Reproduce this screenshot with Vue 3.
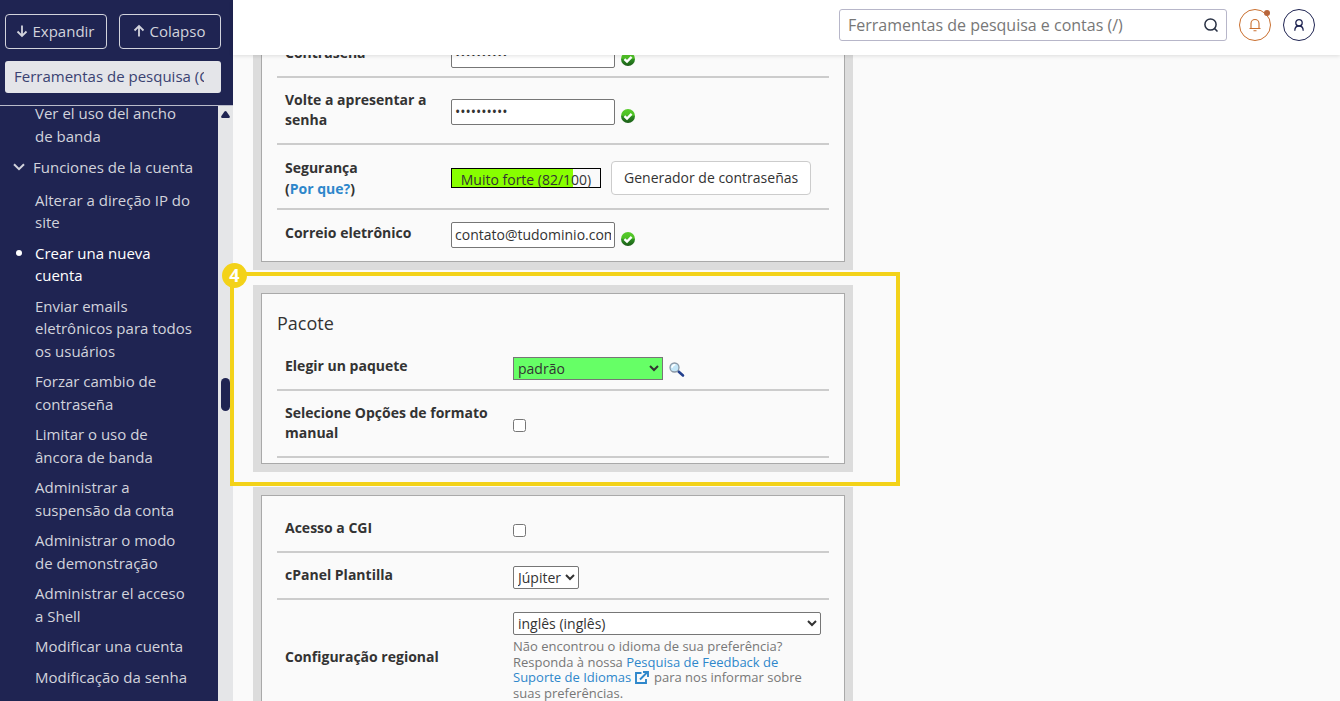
<script setup>
import { ref } from 'vue'

const menuBefore = ['Ver el uso del ancho de banda']
const menu = [
  { text: 'Alterar a direção IP do site' },
  { text: 'Crear una nueva cuenta', active: true },
  { text: 'Enviar emails eletrônicos para todos os usuários' },
  { text: 'Forzar cambio de contraseña' },
  { text: 'Limitar o uso de âncora de banda' },
  { text: 'Administrar a suspensão da conta' },
  { text: 'Administrar o modo de demonstração' },
  { text: 'Administrar el acceso a Shell' },
  { text: 'Modificar una cuenta' },
  { text: 'Modificação da senha' },
]

const password = ref('abcdefghij')
const confirmation = ref('abcdefghij')
const email = ref('contato@tudominio.com')
const strength = 82
const manual = ref(false)
const cgi = ref(false)
</script>

<template>
  <div class="page">
    <svg class="defs" width="0" height="0" aria-hidden="true">
      <defs>
        <linearGradient id="okFill" x1="0" y1="0" x2="0" y2="1">
          <stop offset="0" stop-color="#58cc2c" />
          <stop offset="0.45" stop-color="#4cc024" />
          <stop offset="0.55" stop-color="#2a8a20" />
          <stop offset="1" stop-color="#1c5c18" />
        </linearGradient>
        <symbol id="ok" viewBox="0 0 14 14">
          <circle cx="7" cy="7" r="7" fill="url(#okFill)" />
          <path d="M3.4 7.1 6 9.5l4.6-4.6" fill="none" stroke="#fff" stroke-width="2.4" />
        </symbol>
      </defs>
    </svg>

    <aside class="sidebar">
      <div class="side-head">
        <div class="side-buttons">
          <button type="button" class="side-btn">
            <svg width="12" height="14" viewBox="0 0 12 14" fill="none" stroke="currentColor" stroke-width="1.8">
              <path d="M6 1.5V12M1.500 7.500 6 12l4.500-4.500" />
            </svg>
            Expandir
          </button>
          <button type="button" class="side-btn">
            <svg width="12" height="14" viewBox="0 0 12 14" fill="none" stroke="currentColor" stroke-width="1.8">
              <path d="M6 12.500V2M1.500 6.500 6 2l4.500 4.500" />
            </svg>
            Colapso
          </button>
        </div>
        <input class="side-search" type="text" aria-label="Ferramentas de pesquisa" placeholder="Ferramentas de pesquisa (Ctrl + /)" />
      </div>
      <div class="side-body">
        <nav class="menu">
          <ul>
            <li v-for="m in menuBefore" :key="m"><a href="#">{{ m }}</a></li>
          </ul>
          <button type="button" class="group">
            <svg width="12" height="8" viewBox="0 0 12 8" fill="none" stroke="currentColor" stroke-width="2">
              <path d="M1 1.200 6 6.200l5-5" />
            </svg>
            Funciones de la cuenta
          </button>
          <ul>
            <li v-for="m in menu" :key="m.text" :class="{ active: m.active }">
              <a href="#">{{ m.text }}</a>
            </li>
          </ul>
        </nav>
        <div class="track" aria-hidden="true">
          <svg width="9" height="7" viewBox="0 0 9 7"><path d="M3.500.6q1-1 2 0L8.600 5q.8 2-1 2H1.400q-1.800 0-1-2z" fill="#1f2452" /></svg>
          <span class="thumb"></span>
        </div>
      </div>
    </aside>

    <div class="main">
      <header class="topbar">
        <div class="search">
          <input type="text" aria-label="Pesquisa" placeholder="Ferramentas de pesquisa e contas (/)" />
          <button type="button" aria-label="Buscar">
            <svg width="14" height="14" viewBox="0 0 14 14" fill="none" stroke="#293144" stroke-width="1.500">
              <circle cx="6.500" cy="6.500" r="5.600" /><path d="M10.400 10.400 13.500 13.500" />
            </svg>
          </button>
        </div>
        <button type="button" class="round bell" aria-label="Notificações">
          <svg width="14" height="14" viewBox="0 0 14 14" fill="none" stroke="currentColor" stroke-width="1.100">
            <path d="M1.500 10.500h11M3 10.500V5.500a4 4 0 0 1 8 0v5M5.500 12.800h3" />
          </svg>
          <span class="dot"></span>
        </button>
        <button type="button" class="round user" aria-label="Usuário">
          <svg width="12" height="14" viewBox="0 0 12 14" fill="none" stroke="currentColor" stroke-width="1.300">
            <circle cx="6" cy="4.800" r="3.200" /><path d="M1.800 12.800C1.800 10 3.500 8 6 8s4.200 2 4.200 4.800" />
          </svg>
        </button>
      </header>

      <form class="content" @submit.prevent>
        <section class="panel narrow">
          <div class="row">
            <label for="pw">Contraseña</label>
            <div class="field">
              <input id="pw" v-model="password" class="text" type="password" />
              <svg class="ok" width="14" height="14"><use href="#ok" /></svg>
            </div>
          </div>
          <div class="row">
            <label for="pw2">Volte a apresentar a senha</label>
            <div class="field">
              <input id="pw2" v-model="confirmation" class="text" type="password" />
              <svg class="ok" width="14" height="14"><use href="#ok" /></svg>
            </div>
          </div>
          <div class="row security">
            <div class="label">Segurança<br />(<a href="#">Por que?</a>)</div>
            <div class="field">
              <div class="meter" role="meter" aria-label="Segurança" :aria-valuenow="strength" aria-valuemin="0" aria-valuemax="100">
                <div class="fill" :style="{ width: strength + '%' }"></div>
                <span>Muito forte ({{ strength }}/100)</span>
              </div>
              <button type="button" class="generate">Generador de contraseñas</button>
            </div>
          </div>
          <div class="row last">
            <label for="mail">Correio eletrônico</label>
            <div class="field">
              <input id="mail" v-model="email" class="text" type="text" />
              <svg class="ok" width="14" height="14"><use href="#ok" /></svg>
            </div>
          </div>
        </section>

        <section class="panel">
          <h2>Pacote</h2>
          <div class="row">
            <label for="pkg">Elegir un paquete</label>
            <div class="field">
              <select id="pkg" class="pkg"><option>padrão</option></select>
              <svg width="16" height="18" viewBox="0 0 16 18">
                <path d="m9.500 9.500 4.500 4" stroke="#23408e" stroke-width="2.600" stroke-linecap="round" />
                <circle cx="5.500" cy="5.500" r="4.500" fill="#c4e6f8" stroke="#8b98a6" stroke-width="1.300" />
                <path d="M3 5.700a3 3 0 0 1 3.300-2.900" fill="none" stroke="#fff" stroke-width="1.600" />
              </svg>
            </div>
          </div>
          <div class="row">
            <label for="manual">Selecione Opções de formato manual</label>
            <div class="field"><input id="manual" v-model="manual" type="checkbox" /></div>
          </div>
          <div class="step" aria-hidden="true"><span>4</span></div>
        </section>

        <section class="panel">
          <div class="row">
            <label for="cgi">Acesso a CGI</label>
            <div class="field"><input id="cgi" v-model="cgi" type="checkbox" /></div>
          </div>
          <div class="row">
            <label for="theme">cPanel Plantilla</label>
            <div class="field"><select id="theme"><option>Júpiter</option></select></div>
          </div>
          <div class="row">
            <label for="locale">Configuração regional</label>
            <div>
              <select id="locale" class="wide"><option>inglês (inglês)</option></select>
              <p>
                Não encontrou o idioma de sua preferência? Responda à nossa
                <a href="#">Pesquisa de Feedback de Suporte de Idiomas
                  <svg width="14" height="13" viewBox="0 0 14 13" fill="none" stroke="currentColor" stroke-width="1.900">
                    <path d="M6.500 2H1v10h10V8M5 8.500 12 1.500M8 1h5v5" />
                  </svg></a>
                para nos informar sobre suas preferências.
              </p>
            </div>
          </div>
        </section>
      </form>
    </div>
  </div>
</template>

<style>
body {
  background: #fafafa;
}
</style>

<style scoped>
* {
  box-sizing: border-box;
}
.page {
  display: flex;
  height: 100vh;
  overflow: hidden;
  font-family: "Open Sans", "Noto Sans", sans-serif;
  font-size: 14px;
  line-height: 20px;
  color: #333;
}
button, input, select {
  font: inherit;
  color: inherit;
}
a {
  color: #2e87cb;
  text-decoration: none;
}
.defs {
  position: absolute;
}

/* sidebar */
.sidebar {
  display: flex;
  flex-direction: column;
  flex: 0 0 233px;
  background: #1f2452;
  color: #d2d3dc;
  font-size: 15px;
}
.side-head {
  padding: 14px 12px 12px 5px;
  border-bottom: 1px solid #b9bbca;
}
.side-buttons {
  display: flex;
  gap: 12px;
  margin-bottom: 12px;
}
.side-btn {
  display: flex;
  flex: 1;
  align-items: center;
  justify-content: center;
  gap: 5px;
  height: 35px;
  padding: 0 2px 2px 0;
  border: 1px solid #d2d3dc;
  border-radius: 4px;
  background: none;
}
.side-search {
  display: block;
  width: 100%;
  height: 32px;
  padding: 0 17px 2px 9px;
  border: 0;
  border-radius: 3px;
  background: #e4e5e9;
}
.side-search::placeholder {
  color: #3a4272;
}
.side-body {
  display: flex;
  flex: 1;
  min-height: 0;
  overflow: hidden;
}
.menu {
  flex: 1;
  min-width: 0;
  margin-top: -8px;
  line-height: 1.5;
}
.menu ul {
  margin: 0;
  padding: 0 24px 0 35px;
  list-style: none;
}
.menu li {
  position: relative;
  padding: 4px 0;
}
.menu a {
  color: inherit;
}
.menu .active {
  color: #fff;
}
.menu .active::before {
  content: "";
  position: absolute;
  left: -19px;
  top: 12px;
  width: 6px;
  height: 6px;
  border-radius: 50%;
  background: #fff;
}
.group {
  display: flex;
  align-items: center;
  gap: 8px;
  width: 100%;
  padding: 5px 0 6px 13px;
  border: 0;
  background: none;
  white-space: nowrap;
}
.track {
  position: relative;
  flex: 0 0 15px;
  background: #e5e6e8;
}
.track svg {
  display: block;
  margin: 5px 0 0 3px;
}
.thumb {
  position: absolute;
  left: 3px;
  top: 272px;
  width: 9px;
  height: 33px;
  border-radius: 5px;
  background: #1f2452;
}

/* top bar */
.main {
  position: relative;
  flex: 1;
  min-width: 0;
}
.topbar {
  position: absolute;
  z-index: 2;
  top: 0;
  left: 0;
  right: 0;
  display: flex;
  justify-content: flex-end;
  gap: 12px;
  height: 55px;
  padding: 9px 25px 0 12px;
  background: #fff;
  box-shadow: 0 1px 4px rgba(0, 0, 0, 0.12);
}
.search {
  display: flex;
  align-items: center;
  flex: 0 1 388px;
  height: 32px;
  border: 1px solid #b7b6c9;
  border-radius: 3px;
}
.search input {
  flex: 1;
  min-width: 0;
  padding: 0 8px;
  border: 0;
  background: none;
  font-size: 16px;
}
.search input::placeholder {
  color: #777;
}
.search button {
  display: flex;
  padding: 0 8px;
  border: 0;
  background: none;
}
.round {
  position: relative;
  display: flex;
  align-items: center;
  justify-content: center;
  flex: 0 0 32px;
  height: 32px;
  padding: 0;
  border: 1px solid currentColor;
  border-radius: 50%;
  background: #fff;
}
.bell {
  color: #c96f2f;
}
.user {
  color: #1f2452;
}
.dot {
  position: absolute;
  top: 0;
  right: 0;
  width: 6px;
  height: 6px;
  border-radius: 50%;
  background: #b8653a;
}

/* form panels */
.content {
  display: flex;
  flex-direction: column;
  gap: 15px;
  max-width: 620px;
  padding: 12px 0 0 20px;
}
.panel {
  position: relative;
  padding: 10px 15px 5px;
  margin: 8px;
  border: 1px solid #a9a9a9;
  background: #fafafa;
  box-shadow: 0 0 0 8px #dcdcdc;
}
h2 {
  margin: 0;
  padding: 7px 0 9px;
  font-size: 18px;
  font-weight: 400;
  line-height: 24px;
}
.row {
  display: grid;
  grid-template-columns: 228px 1fr;
  align-items: center;
  min-height: 47px;
  padding: 12px 8px 13px;
  border-bottom: 2px solid #ccc;
}
.narrow .row {
  grid-template-columns: 166px 1fr;
}
.row label,
.row .label {
  padding-right: 20px;
  font-weight: 700;
}
.row.last {
  min-height: 46px;
  border-bottom: 0;
}
.field {
  display: flex;
  align-items: flex-end;
  gap: 6px;
  margin: -6px 0;
  padding-top: 4px;
}
.text {
  width: 164px;
  height: 26px;
  padding: 0 3px 1px;
  border: 1px solid #767676;
  border-radius: 2px;
  background: #fff;
}
.ok {
  margin-bottom: 2px;
}
.row.security {
  padding: 12px 0 9px 8px;
}
.security .label {
  line-height: 21px;
}
.security .field {
  align-items: center;
  gap: 10px;
  padding: 0;
}
.meter {
  position: relative;
  width: 150px;
  height: 20px;
  border: 1px solid #000;
  line-height: 22px;
  text-align: center;
}
.meter .fill {
  position: absolute;
  top: 0;
  bottom: 0;
  left: 0;
  background: #8f0;
}
.meter span {
  position: relative;
}
.generate {
  height: 34px;
  padding: 0 12px;
  border: 1px solid #ccc;
  border-radius: 4px;
  background: #fff;
}
select {
  height: 23px;
  padding: 0;
  border: 1px solid #767676;
  border-radius: 2px;
  background: #fff;
}
.pkg {
  width: 150px;
  border-radius: 0;
  background: #6f6;
}
.wide {
  display: block;
  width: 100%;
}
input[type="checkbox"] {
  width: 13px;
  height: 13px;
  margin: 0;
}
p {
  margin: 4px 0 0;
  font-size: 13px;
  line-height: 1.2;
  color: #777;
}
p svg {
  vertical-align: -2px;
  margin-right: 2px;
}

/* numbered highlight around the package panel */
.step {
  position: absolute;
  z-index: 1;
  inset: -22px -56px -23px -32px;
  border: 4px solid #f3d219;
  pointer-events: none;
}
.step span {
  position: absolute;
  top: -13px;
  left: -12px;
  width: 25px;
  height: 25px;
  border-radius: 50%;
  background: #f3d219;
  color: #fff;
  font-size: 18px;
  font-weight: 700;
  line-height: 24px;
  text-align: center;
}
</style>
